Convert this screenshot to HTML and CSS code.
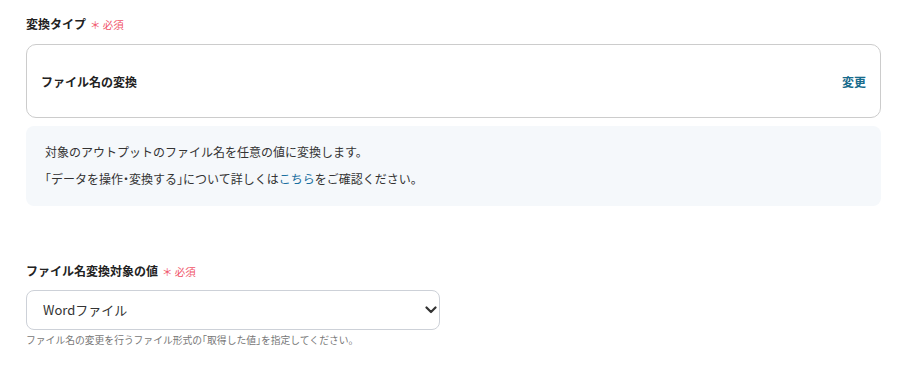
FILE: index.html
```html
<!DOCTYPE html>
<html lang="ja">
<head>
    <meta charset="UTF-8">
    <meta name="viewport" content="width=device-width, initial-scale=1.0">
    <title>変換設定</title>
    <link rel="stylesheet" href="styles.css">
</head>
<body>
    <div class="form">
        <div class="field">
            <div class="label">変換タイプ<span class="required">＊ 必須</span></div>
            <div class="type-card">
                <span class="type-name">ファイル名の変換</span>
                <a class="change-link" href="#">変更</a>
            </div>
            <div class="info-box">
                <p>対象のアウトプットのファイル名を任意の値に変換します。</p>
                <p><span class="punct">「</span>データを操作<span class="punct">・</span>変換する<span class="punct">」</span>について詳しくは<a class="info-link" href="#">こちら</a>をご確認ください。</p>
            </div>
        </div>

        <div class="field field-second">
            <div class="label">ファイル名変換対象の値<span class="required">＊ 必須</span></div>
            <div class="select-wrap">
                <select class="select">
                    <option>Wordファイル</option>
                </select>
                <svg class="chevron" width="12" height="8" viewBox="0 0 12 8"><path d="M1.5 1.5 L6 6 L10.5 1.5" fill="none" stroke="#333" stroke-width="2.2" stroke-linecap="round" stroke-linejoin="round"/></svg>
            </div>
            <div class="help">ファイル名の変更を行うファイル形式の<span class="punct">「</span>取得した値<span class="punct">」</span>を指定してください。</div>
        </div>
    </div>
</body>
</html>
```

FILE: styles.css
```css
body {
    margin: 0;
    background-color: #fff;
    font-family: "Noto Sans CJK JP", "Noto Sans", sans-serif;
    color: #222;
}

.form {
    padding: 15px 28px 0 26px;
}

.label {
    font-size: 12px;
    font-weight: 700;
    line-height: 18px;
    color: #222;
}

.required {
    font-size: 10.5px;
    font-weight: 400;
    color: #f0556a;
    margin-left: 4px;
}

.type-card {
    margin-top: 10px;
    height: 72px;
    border: 1px solid #cccccc;
    border-radius: 10px;
    display: flex;
    align-items: center;
    justify-content: space-between;
    padding: 0 14px;
}

.type-name {
    font-size: 12px;
    font-weight: 700;
}

.change-link {
    font-size: 12px;
    font-weight: 700;
    color: #186b8c;
    text-decoration: none;
}

.info-box {
    margin-top: 8px;
    background-color: #f5f8fb;
    border-radius: 8px;
    padding: 12px 19px 20px;
    height: 48px;
}

.info-box p {
    margin: 0;
    font-size: 12px;
    line-height: 27px;
    color: #333;
}

.punct {
    font-feature-settings: "halt";
}

.info-link {
    color: #1a6fa0;
    text-decoration: none;
}

.field-second {
    margin-top: 56px;
    width: 414px;
}

.select-wrap {
    margin-top: 9px;
    position: relative;
}

.select {
    appearance: none;
    width: 100%;
    height: 40px;
    border: 1px solid #cdd1d8;
    border-radius: 8px;
    background: #fff;
    padding: 0 16px 2px;
    font-family: "Noto Sans CJK JP", "Noto Sans", sans-serif;
    font-size: 13px;
    color: #333;
}

.chevron {
    position: absolute;
    right: 3px;
    top: 16px;
}

.help {
    margin-top: 3px;
    font-size: 9.8px;
    color: #777;
}
```
